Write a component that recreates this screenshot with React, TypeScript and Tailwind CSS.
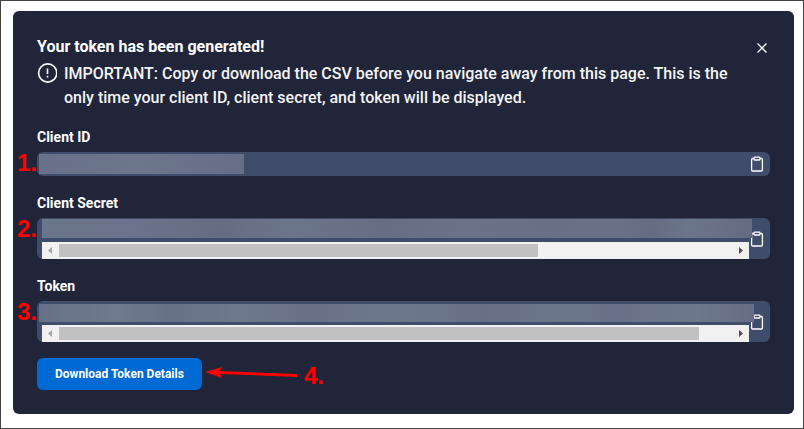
import type { ReactNode } from "react";

type FieldProps = {
  label: string;
  marker: string;
  children: ReactNode;
};

const ClipboardIcon = () => (
  <svg viewBox="0 0 16 16" className="w-4 h-4" fill="none" stroke="currentColor">
    <path d="M5 2.500H3.600a1 1 0 0 0-1 1V14a1 1 0 0 0 1 1h8.800a1 1 0 0 0 1-1V3.500a1 1 0 0 0-1-1H11" strokeWidth="1.300" />
    <rect x="5" y="1.200" width="6" height="2.800" rx="0.700" strokeWidth="1.300" />
  </svg>
);

const CopyButton = ({ label }: { label: string }) => (
  <button type="button" aria-label={`Copy ${label}`} className="shrink-0 self-center text-white">
    <ClipboardIcon />
  </button>
);

const Scrollbar = ({ thumb }: { thumb: number }) => (
  <div className="flex h-[17px] items-center bg-[#f1f1f1]">
    <svg viewBox="0 0 17 17" className="w-[17px] h-[17px] shrink-0" fill="#a3a3a3">
      <path d="M10 5v7L6 8.500z" />
    </svg>
    <div className="flex-1">
      <div className="h-[13px] bg-[#c1c1c1]" style={{ width: `${thumb}%` }} />
    </div>
    <svg viewBox="0 0 17 17" className="w-[17px] h-[17px] shrink-0" fill="#505050">
      <path d="M7 5v7l4-3.500z" />
    </svg>
  </div>
);

const Field = ({ label, marker, children }: FieldProps) => (
  <section className="mt-4">
    <h2 className="mb-1 text-sm leading-[22px] font-bold">{label}</h2>
    <div className="relative flex rounded-md bg-[#404d6a] px-[5px]">
      <span className="absolute top-0 right-full font-['Liberation_Sans',sans-serif] text-2xl leading-[22px] font-bold text-[#ff0000]">
        {marker}
      </span>
      {children}
      <CopyButton label={label} />
    </div>
  </section>
);

const App = () => {
  return (
    <div className="border border-[#444444] bg-white pt-[10px] pr-[9px] pb-[14px] pl-3 font-[Roboto,sans-serif]">
      <main className="rounded-md bg-[#212539] p-6 text-white">
        <header className="mb-px flex justify-between">
          <h1 className="text-base leading-6 font-bold">Your token has been generated!</h1>
          <button type="button" aria-label="Close" className="h-[26px] w-4">
            <svg viewBox="0 0 16 16" className="w-4 h-4" stroke="currentColor" strokeWidth="1.3">
              <path d="M3.500 3.500l9 9M12.500 3.500l-9 9" />
            </svg>
          </button>
        </header>

        <div className="flex gap-[7px] pr-8">
          <svg viewBox="0 0 20 20" className="mt-px w-5 h-5 shrink-0" fill="none" stroke="currentColor">
            <circle cx="10.700" cy="10" r="9.100" strokeWidth="1.600" />
            <path d="M10.500 5.500v5.500M10.500 12.800v1.700" strokeWidth="1.600" />
          </svg>
          <p className="text-base leading-6 font-medium text-[#f4f4f4]">
            IMPORTANT: Copy or download the CSV before you navigate away from this page. This is the
            only time your client ID, client secret, and token will be displayed.
          </p>
        </div>

        <Field label="Client ID" marker="1.">
          <div className="h-6 flex-1">
            <div className="absolute top-[2px] left-[2px] h-5 w-[28%] bg-linear-to-r from-[#687189] via-[#6c768d] to-[#666e87]" />
          </div>
        </Field>

        <Field label="Client Secret" marker="2.">
          <div className="flex-1 pt-6">
            <Scrollbar thumb={71.2} />
          </div>
          <div className="absolute top-px right-[18px] left-[5px] z-10 h-[19px] bg-[linear-gradient(90deg,#6a748b,#6b748c_12%,#656d85_25%,#6b758c_35%,#666e86_48%,#6b738b_60%,#687088_72%,#6a728a_80%,#656d85_86%,#6b758c_91%,#646c84)]" />
        </Field>

        <Field label="Token" marker="3.">
          <div className="flex-1 pt-6">
            <Scrollbar thumb={95.1} />
          </div>
          <div className="absolute top-[3px] right-4 left-[2px] z-10 h-[18px] bg-[linear-gradient(90deg,#667087,#707a8e_11%,#677188_18%,#6f798d_28%,#687188_38%,#6e788d_50%,#677087_62%,#6c768b_74%,#687189_80%,#6e788c_92%,#656e86)]" />
        </Field>

        <div className="mt-4 flex">
          <button
            type="button"
            className="h-8 rounded-md bg-[#006ad4] px-[18px] text-xs leading-5 font-bold"
          >
            Download Token Details
          </button>
          <div className="ml-[3px] flex gap-[7px] text-[#ff0000]">
            <svg viewBox="0 0 92 32" className="h-8 w-[92px]" fill="currentColor">
              <path d="M0 14l17-5-3 5.500 3 5.500z" />
              <path d="M14 14.500l78 3" stroke="currentColor" strokeWidth="2.800" />
            </svg>
            <span className="pt-[6px] font-['Liberation_Sans',sans-serif] text-2xl leading-6 font-bold">4.</span>
          </div>
        </div>
      </main>
    </div>
  );
};

export default App;
